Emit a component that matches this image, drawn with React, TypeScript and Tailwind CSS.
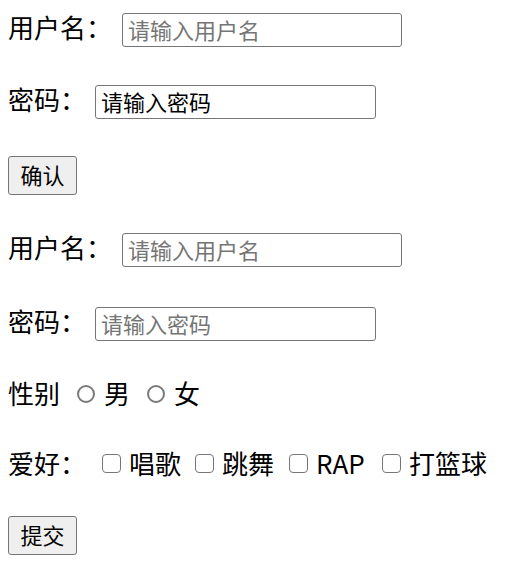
import { useState } from 'react';

const FONT = "font-['Noto_Sans_CJK_SC','Microsoft_YaHei',sans-serif]";

const HOBBIES: { label: string; w: string }[] = [
  { label: '唱歌', w: 'w-[93px]' },
  { label: '跳舞', w: 'w-[94px]' },
  { label: 'RAP', w: 'w-[93px]' },
  { label: '打篮球', w: '' },
];

function TextField({ placeholder, value, width }: { placeholder: string; value?: string; width: string }) {
  return (
    <input
      type="text"
      placeholder={placeholder}
      defaultValue={value}
      className={`${width} h-[34px] shrink-0 rounded-[3px] border border-[#767676] bg-white pb-[3px] pl-[5px] text-[22px] leading-none text-black outline-none placeholder:text-[#757575] ${FONT}`}
    />
  );
}

function Btn({ children }: { children: string }) {
  return (
    <button
      type="button"
      className={`h-[39px] w-[69px] rounded-[3px] border border-[#767676] bg-[#efefef] pb-[2px] text-[22px] leading-none text-black ${FONT}`}
    >
      {children}
    </button>
  );
}

export default function App() {
  const [gender, setGender] = useState('');
  const [hobbies, setHobbies] = useState<string[]>([]);

  return (
    <div className={`flex flex-col bg-white px-[8px] text-[26px] leading-none text-black ${FONT}`}>
      {/* login form */}
      <div className="mt-[10px] flex h-[40px] items-center">
        <span className="w-[114px] pb-[6px]">用户名：</span>
        <TextField placeholder="请输入用户名" width="w-[280px]" />
      </div>
      <div className="mt-[32px] flex h-[40px] items-center">
        <span className="w-[87px] pb-[6px]">密码：</span>
        <TextField placeholder="请输入密码" value="请输入密码" width="w-[281px]" />
      </div>
      <div className="mt-[33px] flex h-[40px] items-center">
        <Btn>确认</Btn>
      </div>

      {/* register form */}
      <div className="mt-[35px] flex h-[40px] items-center">
        <span className="w-[114px] pb-[6px]">用户名：</span>
        <TextField placeholder="请输入用户名" width="w-[280px]" />
      </div>
      <div className="mt-[34px] flex h-[40px] items-center">
        <span className="w-[87px] pb-[6px]">密码：</span>
        <TextField placeholder="请输入密码" width="w-[281px]" />
      </div>
      <div className="mt-[30px] flex h-[40px] items-center">
        <span className="w-[69px] pb-[2px]">性别</span>
        {['男', '女'].map((g) => (
          <label key={g} className={`flex items-center ${g === '男' ? 'w-[70px]' : ''}`}>
            <input
              type="radio"
              name="gender"
              checked={gender === g}
              onChange={() => setGender(g)}
              className="sr-only"
            />
            <span className="-mt-[1px] flex h-[18px] w-[18px] shrink-0 items-center justify-center rounded-full border-2 border-[#7a7a7a] bg-white">
              {gender === g && <span className="h-[9px] w-[9px] rounded-full bg-[#0075ff]" />}
            </span>
            <span className="ml-[9px] pb-[2px]">{g}</span>
          </label>
        ))}
      </div>
      <div className="mt-[30px] flex h-[40px] items-center">
        <span className="w-[94px] pb-[2px]">爱好：</span>
        {HOBBIES.map((h) => (
          <label key={h.label} className={`flex items-center ${h.w}`}>
            <input
              type="checkbox"
              checked={hobbies.includes(h.label)}
              onChange={() =>
                setHobbies((cur) => (cur.includes(h.label) ? cur.filter((x) => x !== h.label) : [...cur, h.label]))
              }
              className="sr-only"
            />
            <span
              className={`-mt-[2px] h-[19px] w-[19px] shrink-0 rounded-[4px] border-[1.5px] border-[#767676] ${
                hobbies.includes(h.label) ? 'bg-[#0075ff]' : 'bg-white'
              }`}
            />
            <span className="ml-[8px] pb-[2px]">{h.label}</span>
          </label>
        ))}
      </div>
      <div className="mt-[31px] flex h-[40px] items-center">
        <Btn>提交</Btn>
      </div>
    </div>
  );
}
